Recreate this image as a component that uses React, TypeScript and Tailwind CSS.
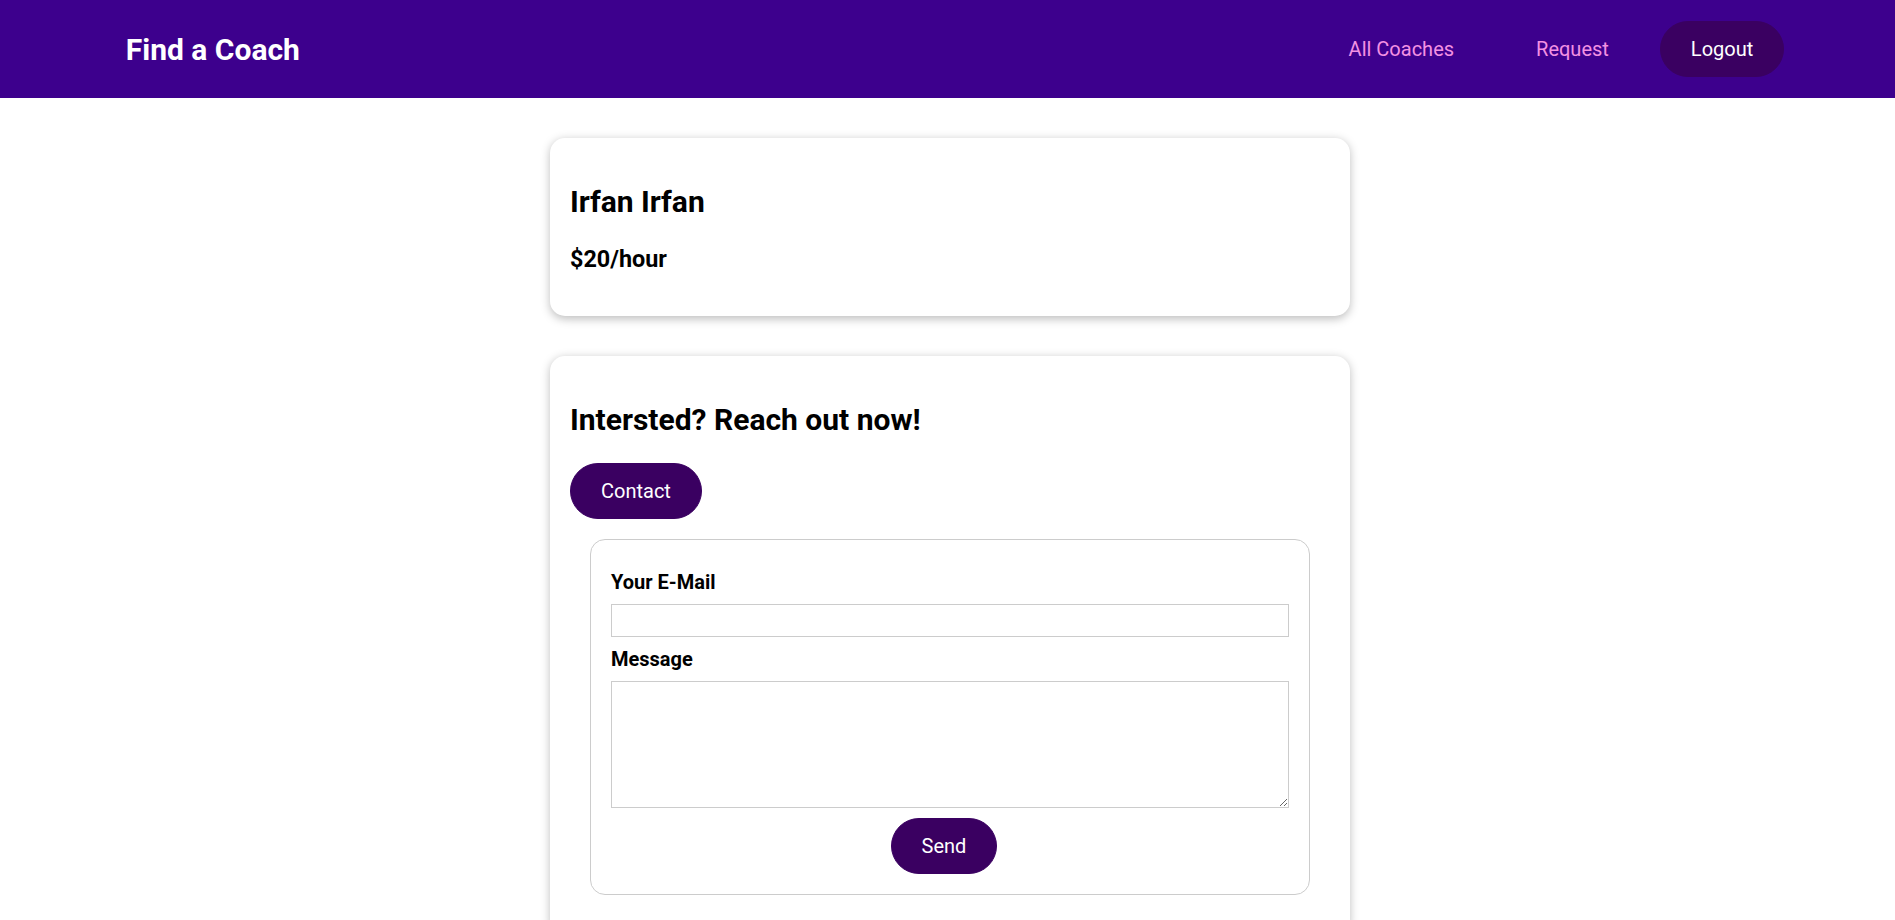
import { useState } from "react";

const NAV_LINKS = ["All Coaches", "Request"];

function PillButton({ children }: { children: React.ReactNode }) {
  return (
    <button className="inline-block px-[30px] py-[15px] text-[20px] leading-[normal] text-white bg-[#3a0061] border border-[#3a0061] rounded-[30px] cursor-pointer">
      {children}
    </button>
  );
}

export default function App() {
  const [email, setEmail] = useState("");
  const [message, setMessage] = useState("");

  return (
    <div className="min-h-screen bg-white text-black leading-[normal] font-['Roboto',sans-serif]">
      {/* Header */}
      <header className="w-full h-[98px] bg-[#3d008d] flex items-center">
        <nav className="w-[90%] mx-auto flex items-center justify-between">
          <h1 className="m-0">
            <a className="inline-block px-[30px] py-[15px] border border-transparent text-white text-[30px] font-bold leading-[normal]">
              Find a Coach
            </a>
          </h1>
          <ul className="flex items-center mr-[6px]">
            {NAV_LINKS.map((l) => (
              <li key={l} className="mx-[10px]">
                <a className="inline-block px-[30px] py-[15px] border border-transparent text-[#f391e3] text-[20px] leading-[normal]">
                  {l}
                </a>
              </li>
            ))}
            <li className="mx-[10px]">
              <PillButton>Logout</PillButton>
            </li>
          </ul>
        </nav>
      </header>

      <main className="pl-[5px]">
        {/* Coach info */}
        <section className="pt-[40px]">
          <div className="w-[800px] mx-auto rounded-[15px] p-[20px] bg-white shadow-[0_2.5px_10px_rgba(0,0,0,0.26)]">
            <h2 className="text-[30px] font-bold leading-[normal] mt-[26px] mb-[25px]">Irfan Irfan</h2>
            <h3 className="text-[23.4px] font-bold leading-[normal] mt-[26px] mb-[23px]">$20/hour</h3>
          </div>
        </section>

        {/* Contact */}
        <section className="pt-[40px]">
          <div className="w-[800px] mx-auto rounded-[15px] p-[20px] bg-white shadow-[0_2.5px_10px_rgba(0,0,0,0.26)]">
            <header>
              <h2 className="text-[30px] font-bold leading-[normal] mt-[26px] mb-[25px]">Intersted? Reach out now!</h2>
              <div className="flex pt-[1px]">
                <PillButton>Contact</PillButton>
              </div>
            </header>

            <form
              className="mx-[20px] mt-[20px] mb-[20px] border border-[#ccc] rounded-[15px] p-[20px]"
              onSubmit={(e) => e.preventDefault()}
            >
              <div className="my-[10px]">
                <label htmlFor="email" className="block font-bold text-[20px] leading-[normal] mb-[10px]">
                  Your E-Mail
                </label>
                <input
                  id="email"
                  type="email"
                  value={email}
                  onChange={(e) => setEmail(e.target.value)}
                  className="block w-full h-[33px] border border-[#ccc] p-[3.75px] text-[20px] outline-none"
                />
              </div>
              <div className="my-[10px]">
                <label htmlFor="message" className="block font-bold text-[20px] leading-[normal] mb-[10px]">
                  Message
                </label>
                <textarea
                  id="message"
                  rows={5}
                  value={message}
                  onChange={(e) => setMessage(e.target.value)}
                  className="block w-full h-[127px] border border-[#ccc] p-[3.75px] text-[20px] outline-none"
                />
              </div>
              <div className="text-center pr-[12px]">
                <PillButton>Send</PillButton>
              </div>
            </form>
          </div>
        </section>
      </main>
    </div>
  );
}
